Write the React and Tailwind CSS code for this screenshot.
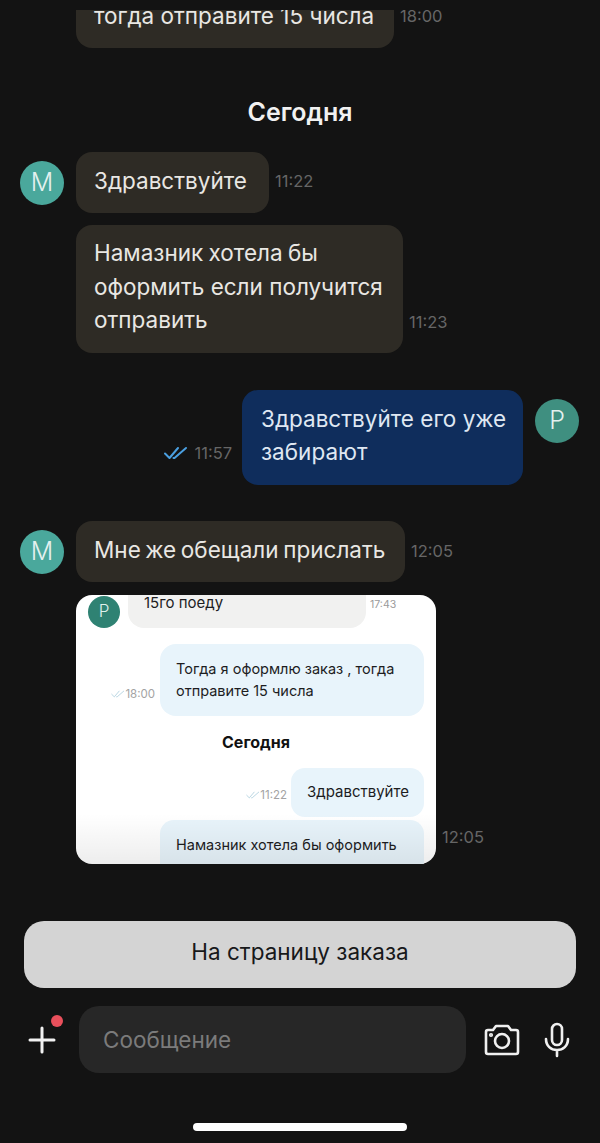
import React from 'react';

const DoubleCheck = ({ className, strokeWidth = 2 }) => (
  <svg viewBox="0 0 24 14" fill="none" stroke="currentColor" strokeWidth={strokeWidth} strokeLinecap="round" strokeLinejoin="round" className={className}>
    <path d="M1 7.5 5.5 12 14 2" />
    <path d="M9.5 12 10.5 12 22 2" />
  </svg>
);

const Avatar = ({ letter, className }) => (
  <div className={`w-[44px] h-[44px] rounded-full flex items-center justify-center text-[25px] font-light text-[#e4f1ef] shrink-0 ${className}`}>
    {letter}
  </div>
);

const Time = ({ children, className = '' }) => (
  <span className={`text-[16.5px] leading-[20px] text-[#666666] ${className}`}>{children}</span>
);

const Thumb = () => (
  <div className="relative w-[360px] h-[269px] rounded-[16px] overflow-hidden bg-white text-[#1d1d1f]">
    <div className="flex pl-[12px] h-[33px]">
      <div className="w-[32px] h-[32px] mt-[1px] rounded-full bg-[#2f8273] text-[#dff0ec] text-[17px] font-light flex items-center justify-center shrink-0">P</div>
      <div className="ml-[8px] w-[238px] h-[33px] bg-[#f1f1f0] rounded-b-[16px] pl-[16px] text-[15px] leading-[16px]">15го поеду</div>
      <span className="ml-[4px] mt-[3px] text-[10.5px] leading-[14px] text-[#9a9a9a]">17:43</span>
    </div>
    <div className="mt-[16px] flex justify-end items-end pr-[12px]">
      <div className="flex items-center mb-[15px] mr-[5px] text-[#a3a3a3]">
        <DoubleCheck className="w-[14px] h-[8px] text-[#b5d3e0]" strokeWidth={1.6} />
        <span className="text-[11.5px] leading-[14px]">18:00</span>
      </div>
      <div className="w-[264px] h-[72px] bg-[#e8f4fb] rounded-[16px] px-[16px] py-[14px] text-[14.5px] leading-[22px]">
        <div>Тогда я оформлю заказ , тогда</div>
        <div>отправите 15 числа</div>
      </div>
    </div>
    <div className="mt-[16px] h-[20px] text-center text-[16px] leading-[20px] font-bold text-[#111]">Сегодня</div>
    <div className="mt-[16px] flex justify-end items-end pr-[12px]">
      <div className="flex items-center mb-[15px] mr-[4px] text-[#a3a3a3]">
        <DoubleCheck className="w-[14px] h-[8px] text-[#b5d3e0]" strokeWidth={1.6} />
        <span className="text-[11.5px] leading-[14px]">11:22</span>
      </div>
      <div className="w-[133px] h-[49px] bg-[#e8f4fb] rounded-[14px] pl-[16px] pt-[14px] text-[15px] leading-[20px] whitespace-nowrap">Здравствуйте</div>
    </div>
    <div className="mt-[3px] flex justify-end pr-[12px]">
      <div className="w-[264px] h-[70px] bg-[#e8f4fb] rounded-[14px] px-[16px] pt-[14px] text-[14.5px] leading-[22px]">
        <div>Намазник хотела бы оформить</div>
        <div>если получится отправить</div>
      </div>
    </div>
    <div className="absolute left-0 right-0 bottom-0 h-[50px] bg-gradient-to-b from-transparent to-[#00000012]" />
  </div>
);

const App = () => {
  return (
    <div className="w-[600px] h-[1143px] overflow-hidden bg-[#131313] text-[#e9e7e3] font-['Inter','Noto_Sans',sans-serif]">
      <div className="pt-[10px] pl-[76px] flex items-start">
        <div className="w-[318px] h-[38px] bg-[#2e2b25] rounded-b-[16px] overflow-hidden flex items-end px-[18px] pb-[16px] text-[22.5px] leading-[33px] whitespace-nowrap">
          тогда отправите 15 числа
        </div>
        <Time className="ml-[6px] -mt-[4px]">18:00</Time>
      </div>

      <div className="mt-[51px] h-[26px] text-center text-[25px] leading-[26px] font-semibold text-[#f1f1f1]">Сегодня</div>

      <div className="mt-[27px] pl-[20px] flex items-center">
        <Avatar letter="M" className="bg-[#4aa89c]" />
        <div className="ml-[12px] h-[61px] px-[18px] pb-[4px] bg-[#2e2b25] rounded-[16px] flex items-center text-[22.5px] w-[193px] whitespace-nowrap">Здравствуйте</div>
        <Time className="ml-[6px] -mt-[3px]">11:22</Time>
      </div>

      <div className="mt-[12px] pl-[76px] flex items-end">
        <div className="w-[327px] h-[128px] px-[18px] pt-[11px] bg-[#2e2b25] rounded-[16px] text-[22.5px] leading-[33.5px] whitespace-nowrap">
          <div className="[word-spacing:-1px]">Намазник хотела бы</div>
          <div>оформить если получится</div>
          <div>отправить</div>
        </div>
        <Time className="ml-[6px] mb-[21px]">11:23</Time>
      </div>

      <div className="mt-[37px] pr-[21px] flex justify-end items-start">
        <div className="self-end flex items-center mb-[22px] mr-[10px]">
          <DoubleCheck className="w-[24px] h-[14px] text-[#4a9fe0]" />
          <Time className="ml-[6px]">11:57</Time>
        </div>
        <div className="w-[281px] h-[95px] px-[19px] pt-[12px] bg-[#0f2d5c] rounded-[16px] text-[22.5px] leading-[33px] text-[#dfe7f2] whitespace-nowrap">
          <div>Здравствуйте его уже</div>
          <div>забирают</div>
        </div>
        <Avatar letter="P" className="ml-[12px] mt-[9px] bg-[#3f8f80]" />
      </div>

      <div className="mt-[36px] pl-[20px] flex items-center">
        <Avatar letter="M" className="bg-[#4aa89c]" />
        <div className="ml-[12px] h-[61px] w-[329px] px-[18px] pb-[4px] bg-[#2e2b25] rounded-[16px] flex items-center text-[22.5px] whitespace-nowrap [word-spacing:-1.7px]">Мне же обещали прислать</div>
        <Time className="ml-[6px] -mt-[2px]">12:05</Time>
      </div>

      <div className="mt-[13px] pl-[76px] flex items-end">
        <Thumb />
        <Time className="ml-[6px] mb-[17px]">12:05</Time>
      </div>

      <div className="mt-[57px] mx-[24px] h-[67px] pb-[6px] rounded-[20px] bg-[#d4d4d4] flex items-center justify-center text-[22.5px] text-[#17181a]">
        На страницу заказа
      </div>

      <div className="mt-[18px] flex items-center h-[67px]">
        <div className="relative w-[79px] h-[67px] flex items-center justify-center shrink-0">
          <svg viewBox="0 0 28 28" className="w-[28px] h-[28px] ml-[5px]" fill="none" stroke="#f2f2f2" strokeWidth="3" strokeLinecap="round">
            <path d="M14 2v24M2 14h24" />
          </svg>
          <span className="absolute left-[51px] top-[9px] w-[12px] h-[12px] rounded-full bg-[#e9505c]" />
        </div>
        <div className="w-[387px] h-[67px] rounded-[20px] bg-[#272727] flex items-center pl-[24px] text-[22.5px] text-[#7b7b7b]">Сообщение</div>
        <svg viewBox="0 0 36 32" className="ml-[18px] w-[36px] h-[32px]" fill="none" stroke="#f0f0f0" strokeWidth="2.6" strokeLinejoin="round">
          <path d="M4 6h5l3-4h12l3 4h5a2 2 0 0 1 2 2v20a2 2 0 0 1-2 2H4a2 2 0 0 1-2-2V8a2 2 0 0 1 2-2Z" />
          <circle cx="18" cy="17" r="7" />
          <circle cx="7" cy="11" r="0.8" fill="#f0f0f0" />
        </svg>
        <svg viewBox="0 0 26 36" className="ml-[24px] w-[26px] h-[36px]" fill="none" stroke="#f0f0f0" strokeWidth="2.6" strokeLinecap="round">
          <rect x="8" y="2" width="10" height="21" rx="5" />
          <path d="M2 17c0 7 5 11 11 11s11-4 11-11M13 28v6" />
        </svg>
      </div>

      <div className="mt-[50px] mx-auto w-[214px] h-[8px] rounded-full bg-white" />
    </div>
  );
};

export default App;
